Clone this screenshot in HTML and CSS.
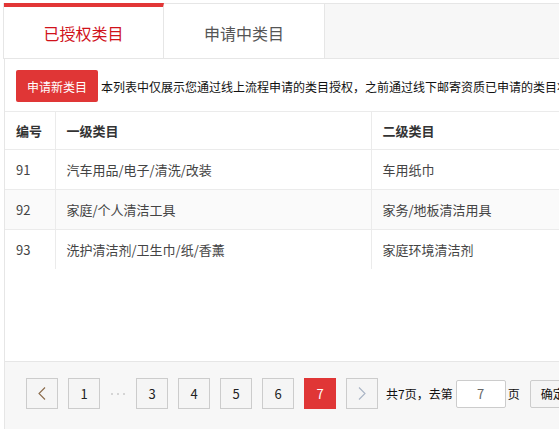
FILE: index.html
```html
<!DOCTYPE html>
<html lang="zh-CN">
<head>
<meta charset="utf-8">
<title>类目管理</title>
<link rel="stylesheet" href="styles.css">
</head>
<body>
<div class="page">
  <div class="tabs">
    <div class="tab tab-active">已授权类目</div>
    <div class="tab">申请中类目</div>
  </div>
  <div class="panel">
    <div class="toolbar">
      <button class="btn-apply">申请新类目</button>
      <span class="desc">本列表中仅展示您通过线上流程申请的类目授权，之前通过线下邮寄资质已申请的类目将不在此处展示，如需查看请联系客服</span>
    </div>
    <table class="grid">
      <colgroup>
        <col class="c-id"><col class="c-first"><col class="c-second">
      </colgroup>
      <thead>
        <tr><th>编号</th><th>一级类目</th><th>二级类目</th></tr>
      </thead>
      <tbody>
        <tr><td>91</td><td>汽车用品/电子/清洗/改装</td><td>车用纸巾</td></tr>
        <tr class="alt"><td>92</td><td>家庭/个人清洁工具</td><td>家务/地板清洁用具</td></tr>
        <tr><td>93</td><td>洗护清洁剂/卫生巾/纸/香薰</td><td>家庭环境清洁剂</td></tr>
      </tbody>
    </table>
    <div class="spacer"></div>
    <div class="footer">
      <div class="pager">
        <span class="pg pg-prev"><svg width="8" height="13" viewBox="0 0 8 13"><polyline points="7,0.5 1,6.5 7,12.5" fill="none" stroke="#8a6a4a" stroke-width="1.1"/></svg></span>
        <span class="pg">1</span>
        <span class="dots"><svg width="16" height="4" viewBox="0 0 16 4"><circle cx="2" cy="2" r="0.8" fill="#aaa"/><circle cx="8" cy="2" r="0.8" fill="#aaa"/><circle cx="14" cy="2" r="0.8" fill="#aaa"/></svg></span>
        <span class="pg">3</span>
        <span class="pg">4</span>
        <span class="pg">5</span>
        <span class="pg">6</span>
        <span class="pg pg-cur">7</span>
        <span class="pg pg-next"><svg width="8" height="13" viewBox="0 0 8 13"><polyline points="1,0.5 7,6.5 1,12.5" fill="none" stroke="#a9b4c4" stroke-width="1.1"/></svg></span>
        <span class="total">共7页，去第</span>
        <input class="goto" type="text" value="7">
        <span class="unit">页</span>
        <button class="btn-ok">确定</button>
      </div>
    </div>
  </div>
</div>
</body>
</html>
```
FILE: styles.css
```css
html, body {
  margin: 0;
  padding: 0;
  background: #fff;
  overflow: hidden;
}
body {
  font-family: "Noto Sans CJK SC", "Noto Sans", sans-serif;
  color: #333;
  width: 559px;
  height: 429px;
}
.page {
  margin: 3px 0 0 3px;
  width: 900px;
}
.tabs {
  display: flex;
  height: 54px;
  background: #f7f7f7;
  border-top: 1px solid #e6e6e6;
  border-left: 1px solid #e6e6e6;
  border-bottom: 1px solid #e6e6e6;
}
.tab {
  width: 161px;
  background: #fff;
  border-right: 1px solid #e6e6e6;
  display: flex;
  align-items: center;
  justify-content: center;
  font-size: 16px;
  color: #555;
  box-sizing: border-box;
  padding-top: 4px;
}
.tab-active {
  width: 160px;
  color: #d0121b;
  border-top: 4px solid #e23636;
  margin-top: -1px;
  padding-top: 0;
}
.panel {
  margin-left: 1px;
  border-left: 1px solid #e6e6e6;
  height: 400px;
  display: flex;
  flex-direction: column;
}
.toolbar {
  display: flex;
  align-items: center;
  height: 52px;
  padding-left: 11px;
  white-space: nowrap;
  box-sizing: border-box;
  padding-top: 2px;
}
.btn-apply {
  width: 82px;
  height: 32px;
  border: none;
  border-radius: 2px;
  background: #e03636;
  color: #fff;
  font-family: inherit;
  font-size: 12px;
  padding: 0;
  margin-right: 3px;
}
.desc {
  font-size: 12px;
  color: #111;
}
.grid {
  border-collapse: collapse;
  table-layout: fixed;
  width: 850px;
  font-size: 13px;
}
.c-id { width: 50px; }
.c-first { width: 316px; }
.c-second { width: 484px; }
.grid th, .grid td {
  text-align: left;
  padding: 0 0 0 11px;
  border-top: 1px solid #ebebeb;
  border-left: 1px solid #ebebeb;
}
.grid th:first-child, .grid td:first-child {
  border-left: none;
}
.grid th {
  height: 37px;
  font-weight: bold;
  color: #333;
}
.grid td {
  height: 39px;
  color: #444;
}
.grid tr.alt td {
  background: #fafafa;
}
.spacer {
  height: 92px;
}
.footer {
  flex: 1;
  background: #f7f7f7;
  border-top: 1px solid #e6e6e6;
  padding-top: 16px;
  padding-left: 21px;
}
.pager {
  display: flex;
  align-items: center;
  white-space: nowrap;
}
.pg {
  width: 32px;
  height: 31px;
  box-sizing: border-box;
  border: 1px solid #cccccc;
  background: #f5f5f5;
  display: flex;
  align-items: center;
  justify-content: center;
  font-size: 13px;
  color: #222;
  margin-right: 10px;
}
.pg-cur {
  background: #e03636;
  border-color: #e03636;
  color: #fff;
}
.dots {
  width: 16px;
  height: 4px;
  margin-right: 10px;
  display: flex;
}
.total {
  font-size: 12px;
  color: #111;
  margin-left: -2px;
  margin-right: 3px;
}
.goto {
  width: 50px;
  height: 28px;
  box-sizing: border-box;
  border: 1px solid #ccc;
  border-radius: 2px;
  background: #fff;
  text-align: center;
  font-family: inherit;
  font-size: 13px;
  color: #666;
  padding: 0;
}
.unit {
  font-size: 12px;
  color: #111;
  margin-left: 2px;
  margin-right: 10px;
}
.btn-ok {
  height: 28px;
  padding: 0 10px;
  border: 1px solid #ccc;
  border-radius: 2px;
  background: #f5f5f5;
  font-family: inherit;
  font-size: 12px;
  color: #111;
}
```
